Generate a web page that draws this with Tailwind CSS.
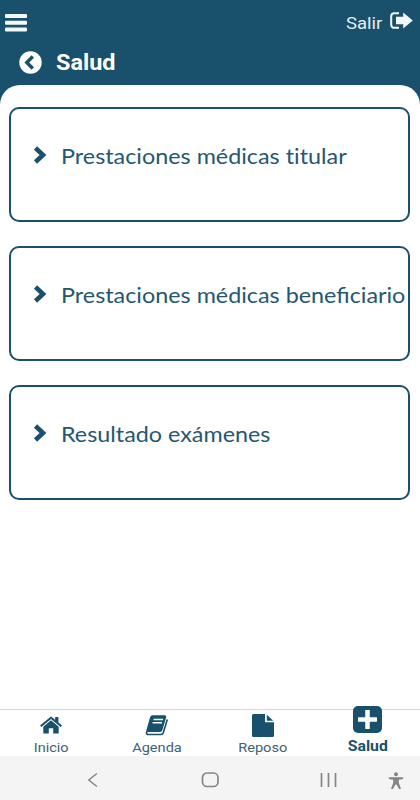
<!DOCTYPE html>
<html lang="es">

<head>
    <meta charset="UTF-8">
    <meta name="viewport" content="width=device-width, initial-scale=1.0">
    <title>Salud</title>
    <script src="https://cdn.jsdelivr.net/npm/@tailwindcss/browser@4"></script>
</head>

<body class="bg-[#19506b] font-['Roboto',sans-serif]">
    <div class="flex flex-col h-[800px] w-[420px] overflow-hidden">

        <!-- Header -->
        <header class="h-[85px] shrink-0 text-white">
            <div class="flex h-11 items-center justify-between pl-[5px] pr-[7px]">
                <button class="mt-0.5">
                    <svg class="w-[22px] h-[18px]" viewBox="0 0 22 18" fill="#f3f7f9">
                        <rect width="22" height="4" rx="1" />
                        <rect y="6.7" width="22" height="4" rx="1" />
                        <rect y="13.4" width="22" height="4" rx="1" />
                    </svg>
                </button>
                <a href="#" class="flex items-center gap-2">
                    <span class="origin-right scale-x-[1.09] text-[17px] leading-5 pt-0.5 text-[#e6eef2]">Salir</span>
                    <svg class="w-[23px] h-[18px] mb-0.5" viewBox="0 0 23 18" fill="none">
                        <path d="M9 1.2H4.2a3 3 0 0 0-3 3v8.6a3 3 0 0 0 3 3H9" stroke="#f3f7f9" stroke-width="2" />
                        <path d="M6 4.8h7.2V.6L22.8 8.5l-9.6 8v-4.3H6z" fill="#f3f7f9" />
                    </svg>
                </a>
            </div>
            <div class="flex h-9 items-center gap-3.5 pl-[19px]">
                <svg class="w-[23px] h-[23px]" viewBox="0 0 23 23">
                    <circle cx="11.5" cy="11.5" r="11.2" fill="#fff" />
                    <path d="M13.8 5.5l-6 6 6 6" fill="none" stroke="#19506b" stroke-width="3.4" />
                </svg>
                <h1 class="origin-left scale-x-[1.09] pt-px text-[21.5px] leading-7 font-bold">Salud</h1>
            </div>
        </header>

        <!-- Content -->
        <main class="flex flex-1 flex-col gap-6 rounded-t-[20px] bg-white pl-[9px] pr-[10px] pt-[22px] font-['Lato',sans-serif] text-[22px] text-[#245870]">
            <a href="#" class="flex h-[115px] gap-3.5 rounded-[10px] border-2 border-[#19506b] pl-[22px] pt-[34px] whitespace-nowrap">
                <svg class="w-[14px] h-[18px] mt-[3px] shrink-0" viewBox="0 0 14 18" fill="none" stroke="#19506b" stroke-width="4.6">
                    <path d="M2.5 2l7.5 7-7.5 7" />
                </svg>
                <span class="origin-left scale-x-[1.061] leading-[26px]">Prestaciones médicas <span class="[font-variant-ligatures:none]">titular</span></span>
            </a>
            <a href="#" class="flex h-[115px] gap-3.5 rounded-[10px] border-2 border-[#19506b] pl-[22px] pt-[34px] whitespace-nowrap">
                <svg class="w-[14px] h-[18px] mt-[3px] shrink-0" viewBox="0 0 14 18" fill="none" stroke="#19506b" stroke-width="4.6">
                    <path d="M2.5 2l7.5 7-7.5 7" />
                </svg>
                <span class="origin-left scale-x-[1.061] leading-[26px]">Prestaciones médicas beneficiario</span>
            </a>
            <a href="#" class="flex h-[115px] gap-3.5 rounded-[10px] border-2 border-[#19506b] pl-[22px] pt-[34px] whitespace-nowrap">
                <svg class="w-[14px] h-[18px] mt-[3px] shrink-0" viewBox="0 0 14 18" fill="none" stroke="#19506b" stroke-width="4.6">
                    <path d="M2.5 2l7.5 7-7.5 7" />
                </svg>
                <span class="origin-left scale-x-[1.061] leading-[26px]">Resultado exámenes</span>
            </a>
        </main>

        <!-- Tab bar -->
        <nav class="grid h-[47px] shrink-0 grid-cols-4 grid-rows-[46px] border-t border-[#d4d7d9] bg-white text-[13.5px] leading-4 text-[#3d6377]">
            <a href="#" class="flex flex-col items-center justify-end pr-[3px] pb-px">
                <svg class="w-[22px] h-[18px] mb-[5px]" viewBox="0 0 22 18" fill="#19506b">
                    <path d="M11 .4L15.2 3.8V1h3.2v5.4L22 9.4l-1.4 1.6L11 3 1.4 11 0 9.4z" />
                    <path d="M11 4.2l7.7 6.5v6.8h-5.5v-5.3H8.8v5.3H3.3v-6.8z" />
                </svg>
                <span class="scale-x-[1.07]">Inicio</span>
            </a>
            <a href="#" class="flex flex-col items-center justify-end pr-px pb-px">
                <svg class="w-6 h-[21px] mb-[3px]" viewBox="0 0 24 21">
                    <path d="M22.3 4.5L18.4 17.5q-.6 2-2.4 2H3.5q-2.2 0-2.2-2.3" fill="none" stroke="#19506b" stroke-width="1.6" />
                    <path d="M7.5.3h12q2.200 0 1.600 2.200L17.400 15q-.6 2-2.400 2H4q-1.600 0-2.700 1.200-.4-1 0-2.600L5 2.600Q5.700.3 7.500.3z" fill="#19506b" />
                    <path d="M8.600 4.500h9.400M7.600 7.800h9.400" stroke="#fff" stroke-width="1.5" />
                </svg>
                <span class="scale-x-[1.08]">Agenda</span>
            </a>
            <a href="#" class="flex flex-col items-center justify-end pb-px">
                <svg class="w-[22px] h-[23px] mb-0.5" viewBox="0 0 22 23" fill="#19506b">
                    <path d="M1.5 0H13v8.2h9v13.3q0 1.5-1.5 1.5h-19Q0 23 0 21.5v-20Q0 0 1.5 0z" />
                    <path d="M14.8.7L21.3 6.8H14.8z" />
                </svg>
                <span class="scale-x-[1.08]">Reposo</span>
            </a>
            <a href="#" class="flex flex-col items-center justify-end pb-0.5 text-[14px] font-bold text-[#19506b]">
                <svg class="w-[29px] h-[27px] mb-[5px] shrink-0" viewBox="0 0 29 27">
                    <rect width="29" height="27" rx="5" fill="#19506b" />
                    <path d="M14.5 4v19M5 13.5h19" stroke="#fff" stroke-width="4.5" />
                </svg>
                <span class="scale-x-[1.13]">Salud</span>
            </a>
        </nav>

        <!-- System navigation -->
        <footer class="flex h-11 shrink-0 items-center bg-[#f4f4f4] pt-1 pl-[87px]">
            <svg class="w-[11px] h-4" viewBox="0 0 11 16" fill="none" stroke="#858585" stroke-width="1.5">
                <path d="M9.8 1.5L1.8 8l8 6.5" />
            </svg>
            <svg class="w-[18px] h-4 ml-[103px]" viewBox="0 0 18 16" fill="none" stroke="#858585" stroke-width="1.7">
                <rect x="1.5" y="1" width="15.5" height="13.5" rx="4.5" />
            </svg>
            <svg class="w-[17px] h-4 ml-[101px]" viewBox="0 0 17 16" stroke="#858585" stroke-width="1.7">
                <path d="M1.5 1v14M8.5 1v14M15.5 1v14" />
            </svg>
            <svg class="w-4 h-[18px] ml-[51px] mt-0.5" viewBox="0 0 16 18" fill="#858585">
                <circle cx="8" cy="2.2" r="2" />
                <path d="M.8 5.2h14.4v1.8l-4.4.7v3.3l2.2 5.6-1.7.7L8.5 12.5h-1L4.7 17.3 3 16.6l2.2-5.6V7.7L.8 7z" />
            </svg>
        </footer>
    </div>
</body>

</html>
